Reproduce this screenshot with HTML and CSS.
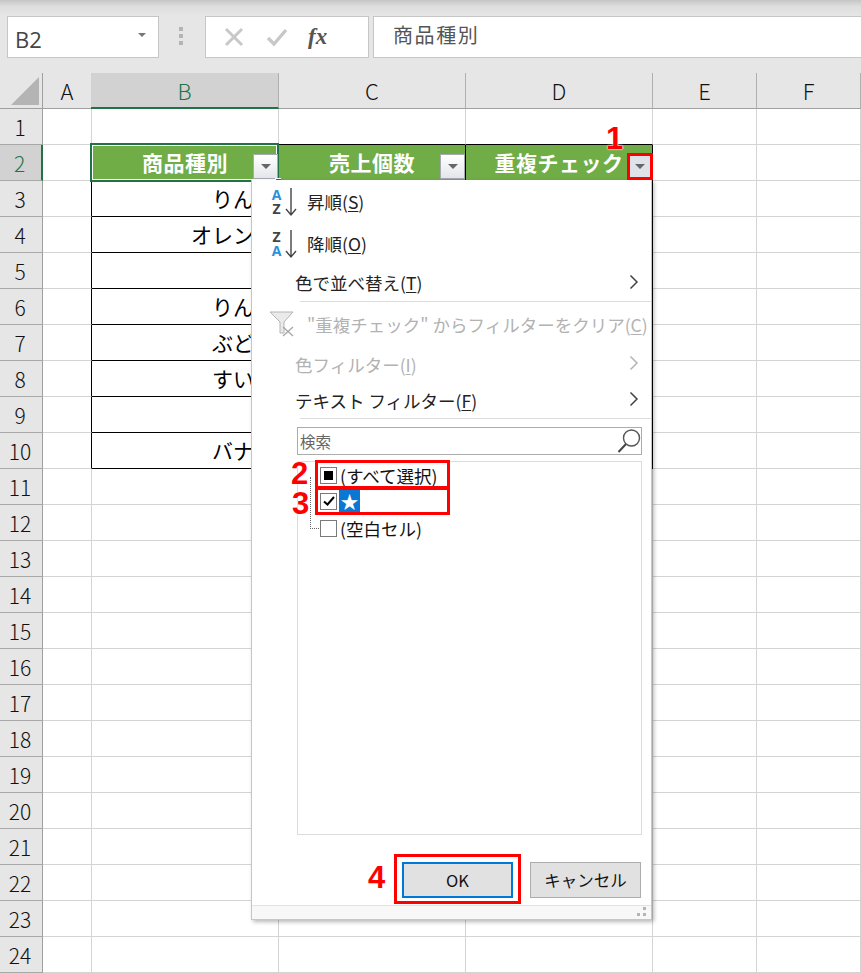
FILE: index.html
```html
<!DOCTYPE html>
<html lang="ja">
<head>
<meta charset="utf-8">
<title>商品種別</title>
<link rel="stylesheet" href="styles.css">
</head>
<body>
<div class="app">
  <div class="topfade"></div>
  <div class="fbar">
    <div class="namebox"><span>B2</span><i class="nb-arrow"></i></div>
    <div class="grip"><i></i><i></i><i></i></div>
    <div class="fbtns">
      <svg class="fi" width="22" height="22" viewBox="0 0 22 22"><path d="M3 3 L19 19 M19 3 L3 19" stroke="#c8c8c8" stroke-width="3" fill="none"/></svg>
      <svg class="fi" width="22" height="22" viewBox="0 0 22 22"><path d="M2 12 L8 18 L20 4" stroke="#c8c8c8" stroke-width="3.4" fill="none"/></svg>
      <span class="fx">fx</span>
    </div>
    <div class="finput">商品種別</div>
  </div>
  <div class="sheet">
    <div class="row head">
      <div class="c rh corner"><i></i></div><div class="c ch">A</div><div class="c ch sel">B</div><div class="c ch">C</div><div class="c ch">D</div><div class="c ch">E</div><div class="c ch">F</div>
    </div>
    <div class="row"><div class="c rh">1</div><div class="c"></div><div class="c"></div><div class="c bb"></div><div class="c bb"></div><div class="c"></div><div class="c"></div></div>
    <div class="row"><div class="c rh rsel">2</div><div class="c"></div>
      <div class="c hd bb active"><span class="sel-box"></span><span class="hd-t">商品種別</span><span class="fbtn"><i></i></span><span class="handle"></span></div>
      <div class="c hd bb br"><span class="hd-t">売上個数</span><span class="fbtn"><i></i></span></div>
      <div class="c hd bb br"><span class="hd-t">重複チェック</span><span class="fbtn d"><i></i></span></div>
      <div class="c"></div><div class="c"></div></div>
    <div class="row"><div class="c rh">3</div><div class="c br"></div><div class="c v bb">りんご</div><div class="c bb"></div><div class="c bb br"></div><div class="c"></div><div class="c"></div></div>
    <div class="row"><div class="c rh">4</div><div class="c br"></div><div class="c v bb">オレンジ</div><div class="c bb"></div><div class="c bb br"></div><div class="c"></div><div class="c"></div></div>
    <div class="row"><div class="c rh">5</div><div class="c br"></div><div class="c v bb"></div><div class="c bb"></div><div class="c bb br"></div><div class="c"></div><div class="c"></div></div>
    <div class="row"><div class="c rh">6</div><div class="c br"></div><div class="c v bb">りんご</div><div class="c bb"></div><div class="c bb br"></div><div class="c"></div><div class="c"></div></div>
    <div class="row"><div class="c rh">7</div><div class="c br"></div><div class="c v bb">ぶどう</div><div class="c bb"></div><div class="c bb br"></div><div class="c"></div><div class="c"></div></div>
    <div class="row"><div class="c rh">8</div><div class="c br"></div><div class="c v bb">すいか</div><div class="c bb"></div><div class="c bb br"></div><div class="c"></div><div class="c"></div></div>
    <div class="row"><div class="c rh">9</div><div class="c br"></div><div class="c v bb"></div><div class="c bb"></div><div class="c bb br"></div><div class="c"></div><div class="c"></div></div>
    <div class="row"><div class="c rh">10</div><div class="c br"></div><div class="c v bb">バナナ</div><div class="c bb"></div><div class="c bb br"></div><div class="c"></div><div class="c"></div></div>
    <div class="row"><div class="c rh">11</div><div class="c"></div><div class="c"></div><div class="c"></div><div class="c"></div><div class="c"></div><div class="c"></div></div>
    <div class="row"><div class="c rh">12</div><div class="c"></div><div class="c"></div><div class="c"></div><div class="c"></div><div class="c"></div><div class="c"></div></div>
    <div class="row"><div class="c rh">13</div><div class="c"></div><div class="c"></div><div class="c"></div><div class="c"></div><div class="c"></div><div class="c"></div></div>
    <div class="row"><div class="c rh">14</div><div class="c"></div><div class="c"></div><div class="c"></div><div class="c"></div><div class="c"></div><div class="c"></div></div>
    <div class="row"><div class="c rh">15</div><div class="c"></div><div class="c"></div><div class="c"></div><div class="c"></div><div class="c"></div><div class="c"></div></div>
    <div class="row"><div class="c rh">16</div><div class="c"></div><div class="c"></div><div class="c"></div><div class="c"></div><div class="c"></div><div class="c"></div></div>
    <div class="row"><div class="c rh">17</div><div class="c"></div><div class="c"></div><div class="c"></div><div class="c"></div><div class="c"></div><div class="c"></div></div>
    <div class="row"><div class="c rh">18</div><div class="c"></div><div class="c"></div><div class="c"></div><div class="c"></div><div class="c"></div><div class="c"></div></div>
    <div class="row"><div class="c rh">19</div><div class="c"></div><div class="c"></div><div class="c"></div><div class="c"></div><div class="c"></div><div class="c"></div></div>
    <div class="row"><div class="c rh">20</div><div class="c"></div><div class="c"></div><div class="c"></div><div class="c"></div><div class="c"></div><div class="c"></div></div>
    <div class="row"><div class="c rh">21</div><div class="c"></div><div class="c"></div><div class="c"></div><div class="c"></div><div class="c"></div><div class="c"></div></div>
    <div class="row"><div class="c rh">22</div><div class="c"></div><div class="c"></div><div class="c"></div><div class="c"></div><div class="c"></div><div class="c"></div></div>
    <div class="row"><div class="c rh">23</div><div class="c"></div><div class="c"></div><div class="c"></div><div class="c"></div><div class="c"></div><div class="c"></div></div>
    <div class="row"><div class="c rh">24</div><div class="c"></div><div class="c"></div><div class="c"></div><div class="c"></div><div class="c"></div><div class="c"></div></div>

    <div class="popup">
      <div class="mi h42"><span class="sort"><span class="az"><b class="blue">A</b><b class="dark">Z</b></span><svg width="12" height="30" viewBox="0 0 12 30"><path d="M6 1 V28 M1 22 L6 28 L11 22" stroke="#444" stroke-width="1.4" fill="none"/></svg></span><span class="mt m">昇順(<u>S</u>)</span></div>
      <div class="mi h42"><span class="sort"><span class="az"><b class="dark">Z</b><b class="blue">A</b></span><svg width="12" height="30" viewBox="0 0 12 30"><path d="M6 1 V28 M1 22 L6 28 L11 22" stroke="#444" stroke-width="1.4" fill="none"/></svg></span><span class="mt m">降順(<u>O</u>)</span></div>
      <div class="mi h37"><span class="mt">色で並べ替え(<u>T</u>)</span><svg class="chev" width="10" height="16" viewBox="0 0 10 16"><path d="M1.5 1.5 L8 8 L1.5 14.5" stroke="#444" stroke-width="1.5" fill="none"/></svg></div>
      <div class="sep"></div>
      <div class="mi h44 dis"><svg class="funnel" width="26" height="26" viewBox="0 0 26 26"><path d="M1 1 H24 L15 11 V22 H11 V11 Z" fill="#eaeaea" stroke="#b4b4b4" stroke-width="1"/><path d="M14 16 L24 25 M24 16 L14 25" stroke="#a8a8a8" stroke-width="1.4" fill="none"/></svg><span class="mt m">"重複チェック" からフィルターをクリア(<u>C</u>)</span></div>
      <div class="mi h36 dis"><span class="mt">色フィルター(<u>I</u>)</span><svg class="chev" width="10" height="16" viewBox="0 0 10 16"><path d="M1.5 1.5 L8 8 L1.5 14.5" stroke="#b4b4b4" stroke-width="1.5" fill="none"/></svg></div>
      <div class="mi h36"><span class="mt">テキスト フィルター(<u>F</u>)</span><svg class="chev" width="10" height="16" viewBox="0 0 10 16"><path d="M1.5 1.5 L8 8 L1.5 14.5" stroke="#444" stroke-width="1.5" fill="none"/></svg></div>
      <div class="sep"></div>
      <div class="search"><span>検索</span><svg width="24" height="26" viewBox="0 0 24 26"><circle cx="14.5" cy="10" r="8" fill="none" stroke="#555" stroke-width="1.4"/><path d="M9 16 L1.5 24" stroke="#444" stroke-width="2" fill="none"/></svg></div>
      <div class="list">
        <span class="tree"></span>
        <div class="li li1"><span class="cb"><i class="mixed"></i></span><span class="lt">(すべて選択)</span></div>
        <div class="li li2"><span class="cb"><svg width="12" height="10" viewBox="0 0 12 10"><path d="M1 5.5 L4.5 8.5 L11 1" stroke="#000" stroke-width="2" fill="none"/></svg></span><span class="star">★</span></div>
        <div class="li li3"><span class="cb"></span><span class="lt">(空白セル)</span></div>
      </div>
      <div class="btns"><button class="btn ok">OK</button><button class="btn">キャンセル</button></div>
      <div class="foot"><span class="rs"><i></i><i></i><i></i></span></div>
    </div>
  </div>

  <span class="num n1">1</span><span class="num n2">2</span><span class="num n3">3</span><span class="num n4">4</span>
  <div class="mark m1"></div><div class="mark m2"></div><div class="mark m3"></div><div class="mark m4"></div>
</div>
</body>
</html>
```

FILE: styles.css
```css
* { box-sizing: border-box; }
html, body { margin: 0; padding: 0; }
body { font-family: "Noto Sans CJK JP", "Noto Sans", sans-serif; background: #fff; color: #000; overflow: hidden; }
.app { position: relative; width: 861px; height: 973px; overflow: hidden; background: #e6e6e6; }
.topfade { height: 16px; background: linear-gradient(#c6c6c6, #dedede 40%, #e6e6e6); }
.fbar { height: 42px; display: flex; align-items: stretch; padding-left: 7px; }
.namebox { width: 152px; background: #fff; border: 1px solid #c6c6c6; display: flex; align-items: center; justify-content: space-between; padding: 3px 12px 0 7px; font-size: 22px; color: #444; font-family: "Open Sans", sans-serif; }
.nb-arrow { width: 0; height: 0; border-left: 4px solid transparent; border-right: 4px solid transparent; border-top: 4px solid #777; margin-bottom: 7px; }
.grip { width: 46px; display: flex; flex-direction: column; align-items: center; justify-content: center; gap: 3px; padding-right: 2px; padding-bottom: 2px; }
.grip i { width: 4px; height: 4px; background: #b4b4b4; }
.fbtns { width: 164px; background: #fff; border: 1px solid #c6c6c6; display: flex; align-items: center; padding-left: 17px; }
.fi { margin-right: 21px; }
.fx { font-family: "Liberation Serif", serif; font-style: italic; font-weight: bold; font-size: 23px; color: #555; margin-left: -1px; }
.finput { flex: 1; margin-left: 4px; background: #fff; border: 1px solid #c6c6c6; border-right: 0; padding-left: 19px; font-size: 20px; letter-spacing: 1.6px; line-height: 36px; color: #555; }
.sheet { position: relative; margin-top: 15px; background: #fff; }
.row { display: grid; grid-template-columns: 43px 49px 187px 187px 187px 104px 104px; height: 36px; }
.c { position: relative; border-right: 1px solid #d4d4d4; border-bottom: 1px solid #d4d4d4; background: #fff; font-size: 20px; display: flex; align-items: center; justify-content: center; }
.rh { background: #e6e6e6; border-right: 1px solid #a0a0a0; border-bottom: 1px solid #a8a8a8; font-size: 21px; color: #111; font-family: "Noto Sans CJK JP", sans-serif; font-weight: 300; padding-right: 2px; }
.ch { background: #e6e6e6; border-right: 1px solid #b0b0b0; border-bottom: 1px solid #a0a0a0; font-size: 22px; font-weight: 300; color: #111; }
.head .c { padding-bottom: 1px; }
.corner { position: relative; border-bottom: 1px solid #a0a0a0; }
.corner i { position: absolute; left: 11px; top: 4px; width: 0; height: 0; border-left: 28px solid transparent; border-bottom: 28px solid #b4b4b4; }
.sel { background: #d2d2d2; color: #217346; border-bottom: 2px solid #217346; margin-left: -1px; }
.rsel { background: #d2d2d2; color: #217346; border-right: 2px solid #217346; }
.bb { border-bottom-color: #000; }
.br { border-right-color: #000; }
.v { justify-content: flex-end; padding-right: 3px; font-size: 21px; line-height: 1; }
.hd { background: #70ad47; color: #fff; font-weight: 700; font-size: 21px; }
.hd-t { letter-spacing: .5px; margin-top: -1px; }
.c.hd:nth-child(4) { padding-left: 0; }
.active { border-right-color: #70ad47; }
.sel-box { position: absolute; left: -2px; top: -2px; right: -1px; bottom: -2px; border: 2px solid #217346; outline: 1px solid #fff; outline-offset: -3px; z-index: 1; }
.handle { position: absolute; right: -3px; bottom: -2px; width: 6px; height: 4px; background: #217346; border: 1px solid #fff; border-right-width: 0; z-index: 3; }
.fbtn { position: absolute; right: 0; top: 9px; width: 25px; height: 25px; background: linear-gradient(#fff, #e4e6ea); border: 1px solid #a5aab2; display: flex; align-items: center; justify-content: center; z-index: 2; }
.fbtn i { width: 0; height: 0; border-left: 5px solid transparent; border-right: 5px solid transparent; border-top: 5px solid #666; }
.fbtn.d { background: #dfe2e8; }

.popup { position: absolute; left: 251px; top: 107px; width: 401px; height: 740px; background: #fff; border: 1px solid #c6c6c6; border-top: 0; box-shadow: 2px 2px 4px rgba(0,0,0,.28); z-index: 5; display: flex; flex-direction: column; }
.mi { position: relative; display: flex; align-items: center; font-size: 17.5px; color: #222; padding-left: 43px; flex: none; }
.h42 { height: 42px; }
.h37 { height: 37px; }
.h44 { height: 44px; }
.h36 { height: 36px; }
.mt.m { margin-left: 12px; }
.mt u { text-decoration: underline; text-underline-offset: 2px; text-decoration-thickness: 1px; }
.dis { color: #b2b2b2; }
.chev { position: absolute; right: 12px; top: 50%; margin-top: -9px; }
.sep { flex: none; height: 1px; margin-left: 48px; background: #dcdcdc; }
.sort { position: absolute; left: 18px; top: 7px; display: flex; align-items: center; gap: 2px; }
.az { display: flex; flex-direction: column; font-family: "Open Sans", sans-serif; font-size: 14px; line-height: 14px; width: 13px; text-align: center; }
.blue { color: #2e8fd8; }
.dark { color: #444; }
.funnel { position: absolute; left: 17px; top: 9px; }
.search { flex: none; margin: 8px 9px 0 45px; height: 28px; border: 1px solid #acacac; display: flex; align-items: center; justify-content: space-between; padding-left: 2px; padding-right: 0; font-size: 15.5px; color: #666; }
.list { position: relative; flex: none; margin: 6px 9px 0 45px; height: 374px; border: 1px solid #dcdcdc; }
.tree { position: absolute; left: 12px; top: 15px; width: 11px; height: 52px; border-left: 1px dotted #666; border-bottom: 1px dotted #666; }
.li { position: absolute; left: 22px; display: flex; align-items: center; font-size: 17.5px; color: #111; height: 24px; }
.li1 { top: 1px; }
.li2 { top: 27px; }
.li3 { top: 54px; }
.cb { flex: none; width: 17px; height: 17px; border: 1px solid #7a7a7a; background: #fff; display: flex; align-items: center; justify-content: center; }
.mixed { width: 9px; height: 9px; background: #000; }
.lt { margin-left: 3px; }
.star { margin-left: 2px; width: 21px; height: 24px; background: #0a78d2; color: #fff; display: flex; align-items: center; justify-content: center; font-size: 18px; line-height: 1; }
.btns { flex: none; height: 63px; padding: 27px 10px 0 150px; display: flex; justify-content: space-between; align-items: flex-start; margin-left: 0; }
.btn { width: 111px; height: 36px; font: 400 16.5px "Noto Sans CJK JP", sans-serif; background: #e1e1e1; border: 1px solid #adadad; color: #111; padding: 0; }
.ok { border: 2px solid #0078d7; }
.foot { position: relative; flex: 1; margin-top: 7px; background: #f8f8f8; border-top: 1px solid #dde4ec; }
.rs { position: absolute; right: 5px; bottom: 3px; width: 9px; height: 9px; }
.rs i { position: absolute; width: 3px; height: 3px; background: #b4b4b4; }
.rs i:nth-child(1) { right: 0; top: 0; }
.rs i:nth-child(2) { right: 0; bottom: 0; }
.rs i:nth-child(3) { left: 0; bottom: 0; }

.mark { position: absolute; border: 3px solid #f00; z-index: 8; }
.m1 { left: 627px; top: 153px; width: 26px; height: 27px; }
.m2 { left: 315px; top: 460px; width: 135px; height: 29px; }
.m3 { left: 315px; top: 487px; width: 135px; height: 28px; }
.m4 { left: 394px; top: 854px; width: 127px; height: 50px; }
.num { position: absolute; z-index: 9; font-family: "Liberation Sans", sans-serif; font-weight: 700; font-size: 31px; line-height: 31px; color: #f00; text-shadow: 0 0 2px #fff, 0 0 2px #fff; }
.n1 { left: 606px; top: 123px; }
.n2 { left: 291px; top: 458px; }
.n3 { left: 292px; top: 488px; }
.n4 { left: 368px; top: 862px; }
```
